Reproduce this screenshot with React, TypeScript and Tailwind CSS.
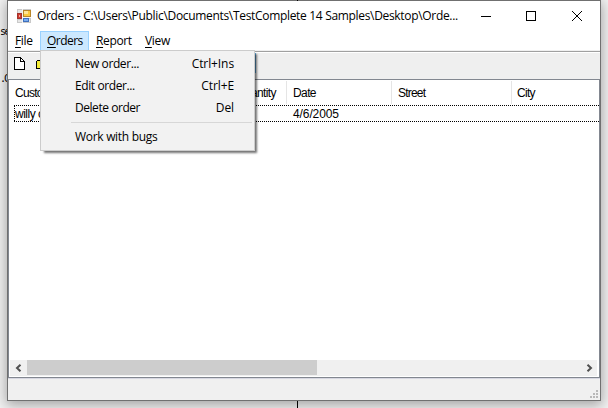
import type { ReactNode } from "react";

const UI = "font-['Open_Sans','Noto_Sans',sans-serif]";
const SANS = "font-['Liberation_Sans',Arial,sans-serif]";

function AppIcon() {
  return (
    <svg width="14" height="14" viewBox="0 0 14 14" shapeRendering="crispEdges">
      <path d="M0 0h14v14H0z" fill="#c9c9c9" />
      <path d="M1 1h4v3H1zM1 11h4v2H1zM12 10h1v3h-1z" fill="#e6e6e6" />
      <path d="M0 4h5v6H0z" fill="#a3332b" />
      <path d="M1 5h3v4H1z" fill="#cf3a2f" />
      <path d="M2 6h1v2H2z" fill="#f4a49b" />
      <path d="M5 0h1v14H5z" fill="#f4f4f4" />
      <path d="M6 1h8v7H6z" fill="#b8862a" />
      <path d="M7 2h6v5H7z" fill="#fbc93d" />
      <path d="M7 2h4v3H7z" fill="#ffe596" />
      <path d="M6 8h8v1H6z" fill="#f4f4f4" />
      <path d="M6 9h6v4H6z" fill="#3f70bd" />
      <path d="M7 10h4v2H7z" fill="#79acf0" />
    </svg>
  );
}

function MenuTitle({ accel, rest, className }: { accel: string; rest: string; className: string }) {
  return (
    <div className={`flex h-5 items-center border ${className}`}>
      <span className="leading-4"><span className="underline underline-offset-2">{accel}</span>{rest}</span>
    </div>
  );
}

function MenuRow({ label, shortcut, tracking }: { label: string; shortcut?: string; tracking: string }) {
  return (
    <div className="flex h-[22px] items-center justify-between pl-[34px] pr-5">
      <span className={tracking}>{label}</span>
      <span className="tracking-[-0.1px]">{shortcut}</span>
    </div>
  );
}

function Column({ width, children }: { width: string; children: ReactNode }) {
  return <div className={`h-[23px] shrink-0 border-r border-[#e5e5e5] pl-[6px] leading-[24px] ${width}`}>{children}</div>;
}

function Dots() {
  return <div className="h-px w-full bg-[repeating-linear-gradient(90deg,#000_0_1px,transparent_1px_2px)]" />;
}

export default function App() {
  return (
    <div className={`relative h-[408px] w-[608px] overflow-hidden bg-[#f2f2f2] text-[12px] text-black ${UI}`}>
      <div className="absolute left-0 top-[26px] font-['DejaVu_Sans_Mono',monospace] text-[10px] leading-3 tracking-[-1.5px]">se</div>
      <div className="absolute left-0 top-[73px] font-['DejaVu_Sans_Mono',monospace] text-[10px] leading-3 tracking-[-2px]">.C</div>

      <div className="absolute left-[7px] top-0 flex h-[401px] w-[594px] flex-col border border-[#707070] bg-white shadow-[0_3px_12px_1px_rgba(0,0,0,0.33)]">
        <div className="flex h-[30px] items-center">
          <div className="ml-[9px] w-[20px]"><AppIcon /></div>
          <div className="w-[430px] whitespace-nowrap leading-4 tracking-[-0.32px]">Orders - C:\Users\Public\Documents\TestComplete 14 Samples\Desktop\Orde...</div>
          <svg className="ml-[14px] shrink-0" width="104" height="12" viewBox="0 0 104 12" fill="none" stroke="#000">
            <path d="M0 6.500h10M45.500 1.500h9v9h-9z" shapeRendering="crispEdges" />
            <path d="M91 1l10 10M101 1L91 11" />
          </svg>
        </div>
        <div className="flex h-[19px] tracking-[-0.35px]">
          <MenuTitle accel="F" rest="ile" className="w-8 border-transparent pl-[6px]" />
          <MenuTitle accel="O" rest="rders" className="w-[49px] border-[#99d1ff] bg-[#cce8ff] pl-[6px] tracking-[-0.55px]" />
          <MenuTitle accel="R" rest="eport" className="w-[49px] border-transparent pl-[6px]" />
          <MenuTitle accel="V" rest="iew" className="w-[38px] border-transparent pl-[6px]" />
        </div>
        <div className="h-px bg-[#f0f0f0]" />
        <div className="h-px bg-[#a0a0a0]" />
        <div className="h-px bg-white" />
        <div className="flex h-[26px] items-center bg-[#efefef] pl-[6px]">
          <svg className="-mt-[6px]" width="40" height="14" viewBox="0 0 40 14" shapeRendering="crispEdges">
            <path d="M.5 1.500h6l4 4v8H.5z" fill="#fff" stroke="#000" />
            <path d="M6.500 1.500v4h4" fill="none" stroke="#000" />
            <path d="M22.500 12.500v-7l1-1h3l1 2h6v6z" fill="#f5ed39" stroke="#000" />
          </svg>
        </div>
        <div className={`flex h-[299px] w-[592px] flex-col border border-[#828790] bg-white ${SANS}`}>
          <div className="mt-px flex h-6 overflow-hidden text-[12px]">
            <Column width="w-[119px] tracking-[-0.7px]">Customer</Column>
            <Column width="w-[159px] pr-[10px] text-right tracking-[-0.6px]">Quantity</Column>
            <Column width="w-[105px] tracking-[-0.6px]">Date</Column>
            <Column width="w-[120px] tracking-[-0.8px]">Street</Column>
            <div className="pl-[5px] leading-[24px] tracking-[-0.7px]">City</div>
          </div>
          <div className="ml-[5px] h-[17px]">
            <Dots />
            <div className="flex h-[15px] border-l border-dotted border-black text-[12px] leading-[17px]">
              <div className="w-[278px] tracking-[-0.5px]">willy clone</div>
              <div className="tracking-[-0.1px]">4/6/2005</div>
            </div>
            <Dots />
          </div>
          <div className="grow" />
          <div className="mb-px ml-px mr-[2px] flex h-4 bg-[#f0f0f0]">
            <div className="flex w-[17px] items-center justify-center">
              <svg width="7" height="8" viewBox="0 0 7 8" fill="none" stroke="#505050" strokeWidth="2"><path d="M5.500.7L2 4l3.500 3.300" /></svg>
            </div>
            <div className="h-[15px] w-[290px] bg-[#cdcdcd]" />
            <div className="flex grow items-center justify-end pr-[4px]">
              <svg width="7" height="8" viewBox="0 0 7 8" fill="none" stroke="#505050" strokeWidth="2"><path d="M1.500.7L5 4 1.500 7.300" /></svg>
            </div>
          </div>
        </div>
        <div className="h-px shrink-0 bg-[#d7d7e1]" />
        <div className="flex grow items-end justify-end bg-[#f0f0f0] pb-[2px] pr-[2px]">
          <svg width="8" height="8" viewBox="0 0 8 8" fill="#b8b8b8" shapeRendering="crispEdges">
            <path d="M6 0h2v2H6zM3 3h2v2H3zM6 3h2v2H6zM0 6h2v2H0zM3 6h2v2H3zM6 6h2v2H6z" />
          </svg>
        </div>
      </div>

      <div className="absolute left-[297px] top-0 h-px w-px bg-black" />
      <div className="absolute left-[297px] top-[401px] h-[7px] w-px bg-black" />
      <div className="absolute left-[255px] top-[53px] h-5 w-px bg-[#62a9dd]" />

      <div className="absolute left-10 top-[50px] flex h-[101px] w-[215px] flex-col border border-[#cccccc] bg-[#f2f2f2] pt-[2px] shadow-[3px_3px_2px_-1px_rgba(0,0,0,0.55)]">
        <MenuRow label="New order..." shortcut="Ctrl+Ins" tracking="tracking-[-0.4px]" />
        <MenuRow label="Edit order..." shortcut="Ctrl+E" tracking="tracking-[-0.4px]" />
        <MenuRow label="Delete order" shortcut="Del" tracking="tracking-[-0.45px]" />
        <div className="mb-[3px] ml-[30px] mr-[2px] mt-[3px] h-px shrink-0 bg-[#d7d7d7]" />
        <MenuRow label="Work with bugs" tracking="tracking-[-0.3px]" />
      </div>
    </div>
  );
}
